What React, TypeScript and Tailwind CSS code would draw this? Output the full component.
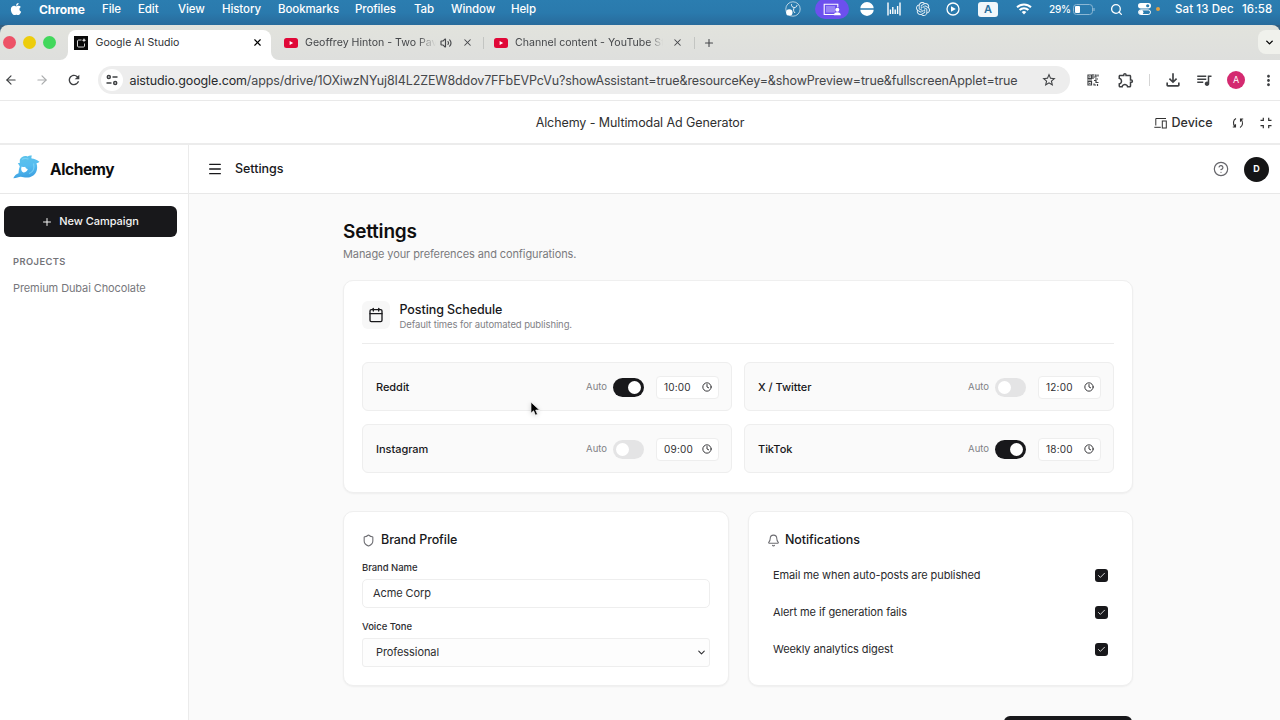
import React from 'react';
import { ArrowLeft, ArrowRight, Bell, Calendar, Check, ChevronDown, CircleHelp, Clock, Menu, Plus, Search, Shield, Volume2, X } from 'lucide-react';
import { FaApple } from 'react-icons/fa';
import { SiOpenai } from 'react-icons/si';
import { MdMoreVert, MdOutlineExtension, MdOutlineFileDownload, MdQueueMusic, MdRefresh, MdStarBorder } from 'react-icons/md';

const menuItems = [
  { label: 'File', className: 'w-[36px]' },
  { label: 'Edit', className: 'w-[40px]' },
  { label: 'View', className: 'w-[44px]' },
  { label: 'History', className: 'w-[56px]' },
  { label: 'Bookmarks', className: 'w-[77px]' },
  { label: 'Profiles', className: 'w-[59px]' },
  { label: 'Tab', className: 'w-[37px]' },
  { label: 'Window', className: 'w-[60px]' },
  { label: 'Help', className: 'w-[40px]' },
];

const schedules = [
  { name: 'Reddit', auto: true, time: '10:00' },
  { name: 'X / Twitter', auto: false, time: '12:00' },
  { name: 'Instagram', auto: false, time: '09:00' },
  { name: 'TikTok', auto: true, time: '18:00' },
];

const notifications = [
  'Email me when auto-posts are published',
  'Alert me if generation fails',
  'Weekly analytics digest',
];

const Cell = ({ className, children }: { className: string; children?: React.ReactNode }) => (
  <div className={`flex shrink-0 items-center justify-center ${className}`}>{children}</div>
);

const MenuBar = () => (
  <div className="flex h-[25px] shrink-0 items-center bg-linear-to-b from-[#2b7db0] via-[#2a7aad] to-[#286b9c] pb-[7px] text-[11.500px] font-medium tracking-[-0.100px] text-white">
    <Cell className="w-[31px]">
      <FaApple className="size-[14px]" />
    </Cell>
    <span className="ml-2 w-[63px] shrink-0 pt-[2px] text-[12px] font-bold">Chrome</span>
    {menuItems.map((item) => (
      <span key={item.label} className={`shrink-0 pt-[2px] ${item.className}`}>{item.label}</span>
    ))}
    <div className="grow" />
    <Cell className="w-[28px]">
      <svg viewBox="0 0 16 16" className="size-4" fill="none" stroke="white">
        <circle cx="8" cy="8" r="7.2" strokeWidth="0.8" opacity="0.8" />
        <circle cx="4.300" cy="11.400" r="3.200" fill="white" stroke="none" />
        <path d="M6.500 3.200c-.3 2 1 3.400 3 3.300 1.700-.1 2.500-1.200 2.500-2.600M9.500 6.500c-1.500 1.600-1.200 4 .6 5.500" strokeWidth="0.9" />
      </svg>
    </Cell>
    <Cell className="ml-[8px] h-[20px] w-[34px] rounded-full bg-[#6c50ee]">
      <svg viewBox="0 0 18 13" className="h-[13px] w-[18px]" fill="none" stroke="white" strokeWidth="1.100">
        <path d="M11 11.500H1.200V1.200h13.600v3" />
        <rect x="3" y="3" width="9" height="6.500" fill="#9885f5" stroke="none" />
        <circle cx="14.300" cy="6.800" r="2" fill="white" stroke="none" />
        <path d="M10.800 12.300c0-2 1.500-3 3.500-3s3.500 1 3.500 3z" fill="white" stroke="none" />
      </svg>
    </Cell>
    <Cell className="w-[35px]">
      <svg viewBox="0 0 14 14" className="size-[14px]" fill="white">
        <path d="M.3 6.300a6.700 6.200 0 0 1 13.400 0zM.3 7.700a6.700 6.200 0 0 0 13.400 0z" />
      </svg>
    </Cell>
    <Cell className="w-[20px]">
      <svg viewBox="0 0 14 14" className="size-[14px]" stroke="white" strokeWidth="1.400">
        <path d="M1 .5v13M3.400 7.500v4.500M5.800 5v7M8.200 7.500v4.500M10.600 4v8M13 .5v13" />
      </svg>
    </Cell>
    <Cell className="w-[38px]">
      <SiOpenai className="size-[14px] opacity-90" />
    </Cell>
    <Cell className="w-[22px]">
      <svg viewBox="0 0 14 14" className="size-[14px]" fill="none" stroke="white">
        <circle cx="7" cy="7" r="6" strokeWidth="1.300" />
        <path d="M5 4.200v5.600L9.800 7z" fill="white" stroke="none" />
      </svg>
    </Cell>
    <Cell className="ml-[14px] h-[15px] w-[20px] rounded-[3px] bg-[#f1f7fb] text-[11px] font-semibold text-[#2a709e]">A</Cell>
    <Cell className="w-[51px]">
      <svg viewBox="0 0 16 12" className="h-[12px] w-[16px]" fill="none" stroke="white" strokeWidth="2">
        <path d="M1 4.300a10 10 0 0 1 14 0M3.600 7a6.300 6.300 0 0 1 8.800 0" />
        <path d="M5.700 9a3.400 3.400 0 0 1 4.600 0L8 11.500z" fill="white" stroke="none" />
      </svg>
    </Cell>
    <span className="w-[24px] shrink-0 text-[10px] tracking-[-0.200px]">29%</span>
    <svg viewBox="0 0 22 11" className="h-[11px] w-[22px] shrink-0" fill="none">
      <rect x="0.500" y="0.500" width="19" height="10" rx="3" stroke="#8bb7d4" />
      <rect x="2" y="2" width="5" height="7" rx="1" fill="white" />
      <path d="M21 4v3" stroke="#8bb7d4" strokeWidth="1.200" />
    </svg>
    <Cell className="w-[43px]">
      <Search className="size-[13px]" strokeWidth={2.4} />
    </Cell>
    <svg viewBox="0 0 13 12" className="h-[12px] w-[13px] shrink-0">
      <rect width="13" height="5.500" rx="2.750" fill="white" />
      <circle cx="9.700" cy="2.750" r="1.600" fill="#2b7db0" />
      <rect x="0.500" y="6.900" width="12" height="4.600" rx="2.300" fill="#2b7db0" stroke="white" />
      <circle cx="3.200" cy="9.200" r="2.200" fill="white" />
    </svg>
    <div className="ml-[5px] size-1 shrink-0 rounded-full bg-[#dfa044]" />
    <span className="ml-[15px] w-[67px] shrink-0 pt-[2px] whitespace-nowrap text-[11.500px] tracking-[0.100px]">Sat 13 Dec</span>
    <span className="w-[38px] shrink-0 pt-[2px] text-[11.500px] tracking-[0.100px]">16:58</span>
  </div>
);

const YoutubeIcon = () => (
  <svg viewBox="0 0 14 10" className="h-[10px] w-[14px] shrink-0">
    <rect width="14" height="10" rx="2.500" fill="#e00837" />
    <path d="M5.600 2.900v4.200L9.200 5z" fill="white" />
  </svg>
);

const TabStrip = () => (
  <div className="shrink-0 bg-[#345f80]">
    <div className="flex h-[35px] items-end rounded-t-[8px] bg-linear-to-b from-[#e2e3dd] to-[#dedfdd] text-[10.600px] text-[#45474a]">
      <div className="flex h-[34px] w-[60px] shrink-0 items-center gap-[7px] pb-px pl-[2.500px]">
        <div className="size-[13px] rounded-full bg-[#ed5267]" />
        <div className="size-[13px] rounded-full bg-[#edcd0c]" />
        <div className="size-[13px] rounded-full bg-[#42d85c]" />
      </div>
      <svg viewBox="0 0 8 8" className="size-2 shrink-0" fill="white">
        <path d="M8 0v8H0a8 8 0 0 0 8-8z" />
      </svg>
      <div className="flex h-[30px] w-[203px] shrink-0 items-center rounded-t-[8px] bg-white pb-[5px] pl-[6px] text-[#303236]">
        <svg viewBox="0 0 14 14" className="size-[14px] shrink-0" fill="none">
          <rect width="14" height="14" fill="#0a0a0a" />
          <path d="M7.500 4H4.500C4 4 3.500 4.400 3.500 5v5c0 .6.400 1 1 1h5c.6 0 1-.4 1-1V7.500" stroke="#d5d5d5" />
          <path d="M10 2l.6 1.600 1.600.6-1.600.6L10 6.400l-.6-1.600-1.600-.6 1.600-.6z" fill="white" />
        </svg>
        <span className="ml-[7.500px] grow">Google AI Studio</span>
        <X className="mr-[8px] size-[11px] text-black" strokeWidth={2.500} />
      </div>
      <svg viewBox="0 0 8 8" className="size-2 shrink-0" fill="white">
        <path d="M0 0v8h8a8 8 0 0 1-8-8z" />
      </svg>
      <div className="flex h-[30px] shrink-0 items-center pb-[5px] pl-[5px]">
        <YoutubeIcon />
        <span className="ml-[7px] w-[131px] whitespace-nowrap [mask-image:linear-gradient(to_right,black_86%,transparent)]">Geoffrey Hinton - Two Pav</span>
        <Volume2 className="ml-[4px] size-[12px]" strokeWidth={2.300} />
        <X className="ml-[10px] size-[11px]" strokeWidth={2.300} />
        <div className="ml-[10px] h-3 w-px bg-[#c3c5c2]" />
        <div className="w-[10px]" />
        <YoutubeIcon />
        <span className="ml-[7px] w-[148px] whitespace-nowrap [mask-image:linear-gradient(to_right,black_90%,transparent)]">Channel content - YouTube St</span>
        <X className="ml-[9px] size-[11px]" strokeWidth={2.300} />
        <div className="ml-[11px] h-3 w-px bg-[#c3c5c2]" />
        <Plus className="ml-[8px] size-[12px]" strokeWidth={2.200} />
      </div>
      <div className="grow" />
      <Cell className="mb-[6px] h-[24px] w-[22px] rounded-l-[8px] bg-[#f0f1ec]">
        <ChevronDown className="size-[11px] text-black" strokeWidth={3} />
      </Cell>
    </div>
  </div>
);

const Toolbar = () => (
  <div className="flex h-[41px] shrink-0 items-center border-b border-[#e9e9e9] text-[#3e4043]">
    <Cell className="w-[22px]"><ArrowLeft className="size-[14px]" strokeWidth={2} /></Cell>
    <Cell className="w-[40px]"><ArrowRight className="size-[14px] text-[#aaacad]" strokeWidth={2} /></Cell>
    <Cell className="w-[24px]"><MdRefresh className="size-[16px]" /></Cell>
    <div className="ml-3 flex h-[28px] w-[972px] shrink-0 items-center rounded-full bg-[#ededed] pl-[3px]">
      <Cell className="size-[22px] rounded-full bg-white">
        <svg viewBox="0 0 12 12" className="size-3" fill="none" stroke="currentColor" strokeWidth="1.500">
          <circle cx="2.800" cy="3" r="1.500" />
          <path d="M6.500 3h5M.5 9h5" />
          <circle cx="9.200" cy="9" r="1.500" />
        </svg>
      </Cell>
      <span className="ml-[6.500px] grow pt-[2px] text-[12.500px] tracking-[-0.125px] whitespace-nowrap text-[#45474a]">
        <span className="text-[#27292c]">aistudio.google.com</span>/apps/drive/1OXiwzNYuj8I4L2ZEW8ddov7FFbEVPcVu?showAssistant=true&amp;resourceKey=&amp;showPreview=true&amp;fullscreenApplet=true
      </span>
      <MdStarBorder className="mr-[13px] size-[16px] shrink-0" />
    </div>
    <Cell className="w-[46px]">
      <svg viewBox="0 0 12 12" className="size-3" fill="none" stroke="currentColor" strokeWidth="1.200">
        <path d="M1 1h3.500v3.500H1zM7.500 1H9v2H7M11 .5v2M8 5h3M1 7.500h3.500V11H1zM6 0v5M0 6h5M7 6.500h2v2h2.500M7 9.500V11h2M10.500 10v2" />
        <path d="M2.200 2.200h1.200v1.200H2.200zM2.200 8.700h1.200v1.200H2.200z" fill="currentColor" stroke="none" />
      </svg>
    </Cell>
    <Cell className="w-[20px]"><MdOutlineExtension className="size-[18px]" /></Cell>
    <Cell className="w-[26px]"><div className="h-3 w-px bg-[#d5d5d5]" /></Cell>
    <Cell className="w-[22px]"><MdOutlineFileDownload className="size-[20px]" /></Cell>
    <Cell className="w-[40px]"><MdQueueMusic className="size-[18px]" /></Cell>
    <Cell className="w-[24px]">
      <div className="flex size-[18px] items-center justify-center rounded-full bg-[#d42a70] text-[9px] text-white">A</div>
    </Cell>
    <Cell className="w-[40px]"><MdMoreVert className="size-[17px]" /></Cell>
  </div>
);

const AppletBar = () => (
  <div className="flex h-[44px] shrink-0 items-center border-b-2 border-[#ececec] pt-[2px] text-[#303030]">
    <div className="w-[126px]" />
    <div className="grow text-center text-[12.500px] tracking-[-0.090px]">Alchemy - Multimodal Ad Generator</div>
    <div className="flex w-[126px] shrink-0 items-center">
      <svg viewBox="0 0 13 12" className="h-3 w-[13px]" fill="none" stroke="currentColor">
        <path d="M1.800 8.500V1.500H12M.3 10.300h6.500" />
        <rect x="8.300" y="4" width="4" height="7" />
      </svg>
      <span className="ml-[4.500px] w-[60px] text-[12.500px] font-medium">Device</span>
      <svg viewBox="0 0 12 12" className="size-3" fill="none" stroke="currentColor" strokeWidth="1.100">
        <path d="M4 1.500C1.200 3 .5 6.500 3 9.800M.8 10H3.500V7.300M8 10.500c2.800-1.500 3.500-5 1-8.300M11.200 2H8.500v2.700" />
      </svg>
      <svg viewBox="0 0 12 12" className="ml-[16px] size-3 shrink-0" fill="none" stroke="currentColor" strokeWidth="1.200">
        <path d="M3.300 .8v2.500H.5M8.700 .8v2.500h2.800M3.300 11.200V8.700H.5M8.700 11.200V8.700h2.800" />
      </svg>
    </div>
  </div>
);

const DolphinLogo = () => (
  <svg viewBox="0 0 27 24" className="h-6 w-[27px] shrink-0">
    <defs>
      <linearGradient id="dolphin" x1="0.300" y1="0" x2="0.500" y2="1">
        <stop offset="0" stopColor="#5dc3ea" />
        <stop offset="0.500" stopColor="#55bcf0" />
        <stop offset="1" stopColor="#3c9fe0" />
      </linearGradient>
    </defs>
    <path d="M6.800 4.800C8.500 1.500 11.500.4 14.500 1.500c1.500-1.100 3.200-1.300 4.500-.8-.7.9-.8 1.800-.4 2.700 2.600 0 5.500 1.300 7.900 3.300-.8.900-1.900 1.400-3 1.600 2 6.200-.6 12.200-6.700 13.900-3.400.9-6.500 0-9-.4-2.200.3-4.200 1.200-7.500 1.400 1.200-2.300 2.900-4.400 5.200-5 .2-2.600.5-4.700 1.300-6.600-.5-1.200-.8-2-2-3 .7-.4 1.300-.5 2-.5zM8.700 11.500c-1.100 2.500-.5 4.800 1.600 6 2.300-.3 3.900-1.400 4.500-3.600-1.500-.1-2.300-.8-2.700-2.100-1.100.4-2.300.3-3.400-.3z" fill="url(#dolphin)" fillRule="evenodd" />
    <path d="M20.500 8.500c1.200 4.500-.5 8.500-4.500 10.200M9 4.500c2-1.500 4.500-1.300 6.500-.3" fill="none" stroke="#8bdcfa" strokeWidth="1.300" opacity="0.600" />
  </svg>
);

const Sidebar = () => (
  <aside className="flex w-[189px] shrink-0 flex-col border-r border-[#ebebeb] bg-white">
    <div className="flex h-[49px] shrink-0 items-center border-b border-[#e8e8e8] pl-[12.500px]">
      <div className="pb-1"><DolphinLogo /></div>
      <span className="ml-[10.500px] pt-px text-[15.500px] font-bold tracking-[-0.400px] text-[#0c0c0d]">Alchemy</span>
    </div>
    <button className="mt-3 ml-[3.500px] flex h-[31px] w-[173px] items-center justify-center gap-[6px] rounded-[6px] bg-[#18181b] text-[11px] font-medium tracking-[-0.050px] text-[#f4f4f4]">
      <Plus className="size-[12px]" strokeWidth={2} />
      New Campaign
    </button>
    <h3 className="mt-[17px] ml-[13px] text-[9.300px] leading-[15px] font-semibold tracking-[0.450px] text-[#747479]">PROJECTS</h3>
    <p className="mt-[11px] ml-[13px] text-[11px] leading-[16px] tracking-[-0.100px] text-[#77777c]">Premium Dubai Chocolate</p>
  </aside>
);

const Toggle = ({ on }: { on: boolean }) => (
  <div className={`flex h-[19px] w-[31px] items-center rounded-full px-[3px] ${on ? 'justify-end bg-[#18181b]' : 'bg-[#e4e4e5]'}`}>
    <div className="size-[13px] rounded-full bg-white" />
  </div>
);

const Settings = () => (
  <main className="flex grow flex-col bg-[#fafafa] pt-[27px] pl-[154px]">
    <h1 className="text-[19px] leading-[22px] font-semibold tracking-[-0.200px] text-[#0f0f10]">Settings</h1>
    <p className="mt-[3px] text-[11px] leading-[16px] tracking-[-0.100px] text-[#7a7a7e]">Manage your preferences and configurations.</p>

    <section className="mt-[18px] h-[213px] w-[790px] shrink-0 rounded-[10px] border border-[#efefef] bg-white px-[18px] pt-[18px] shadow-xs">
      <div className="flex h-[45px] border-b border-[#ececec]">
        <Cell className="mt-[2px] size-[28px] rounded-[6px] bg-[#f7f7f7]">
          <Calendar className="size-[16px] text-[#18181b]" strokeWidth={2} />
        </Cell>
        <div className="ml-[9.500px]">
          <h2 className="pt-px text-[12.500px] leading-[19px] font-medium tracking-[-0.080px] text-[#18181b]">Posting Schedule</h2>
          <p className="text-[9.500px] leading-[12px] tracking-[-0.100px] text-[#818186]">Default times for automated publishing.</p>
        </div>
      </div>
      <div className="mt-[18px] grid grid-cols-2 gap-x-3 gap-y-[13px]">
        {schedules.map((item) => (
          <div key={item.name} className="flex h-[49px] items-center rounded-[6px] border border-[#eeeeee] bg-[#fafafa] pt-px pr-[12px] pl-[13px]">
            <span className="grow text-[11px] font-medium tracking-[-0.040px] text-[#18181b]">{item.name}</span>
            <span className="mr-[6px] text-[9.500px] text-[#818186]">Auto</span>
            <Toggle on={item.auto} />
            <div className="ml-[12px] flex h-[23px] w-[63px] items-center justify-between rounded-[4px] border border-[#eeeeee] bg-white pr-[6px] pl-[7px] text-[10px] text-[#303033]">
              <span className="tracking-[0.200px]">{item.time}</span>
              <Clock className="size-[10px]" strokeWidth={2.300} />
            </div>
          </div>
        ))}
      </div>
    </section>

    <div className="mt-[18px] flex w-[790px] shrink-0 gap-[19px]">
      <section className="h-[175px] w-[386px] shrink-0 rounded-[10px] border border-[#efefef] bg-white px-[18px] pt-[18px] shadow-xs">
        <h2 className="flex items-center text-[12.500px] leading-[20px] font-medium tracking-[-0.080px] text-[#18181b]">
          <Shield className="mr-[6px] size-[13px] text-[#6d6d72]" strokeWidth={2} />
          Brand Profile
        </h2>
        <label className="mt-[11px] block text-[9.500px] leading-[14px] font-medium tracking-[-0.050px] text-[#2d2d30]">Brand Name</label>
        <div className="mt-[4px] flex h-[29px] items-center rounded-[5px] border border-[#eeeeee] px-[10px] text-[11px] tracking-[-0.080px] text-[#2d2d30]">Acme Corp</div>
        <label className="mt-[12px] block text-[9.500px] leading-[14px] font-medium tracking-[-0.050px] text-[#2d2d30]">Voice Tone</label>
        <div className="mt-[4px] flex h-[29px] items-center justify-between rounded-[3px] border border-[#eeeeee] bg-[#fdfdfd] pr-[2px] pl-[13px] text-[11px] tracking-[-0.080px] text-[#2d2d30]">
          Professional
          <ChevronDown className="size-[11px]" strokeWidth={2.300} />
        </div>
      </section>
      <section className="h-[175px] w-[385px] shrink-0 rounded-[10px] border border-[#efefef] bg-white px-[18px] pt-[18px] shadow-xs">
        <h2 className="flex items-center text-[12.500px] leading-[20px] font-medium tracking-[-0.080px] text-[#18181b]">
          <Bell className="mr-[5px] size-[13px] text-[#6d6d72]" strokeWidth={2} />
          Notifications
        </h2>
        <div className="mt-[7px]">
          {notifications.map((text) => (
            <div key={text} className="flex h-[37px] items-center justify-between pr-[6px] pl-[6px] text-[11px] tracking-[-0.100px] text-[#29292c]">
              {text}
              <div className="flex size-[13px] items-center justify-center rounded-[3px] bg-[#18181b]">
                <Check className="size-[9px] text-[#dddddd]" strokeWidth={2.500} />
              </div>
            </div>
          ))}
        </div>
      </section>
    </div>
    <button className="mt-[30px] ml-[661px] h-[32px] w-[128px] shrink-0 rounded-[6px] bg-[#18181b]" />
  </main>
);

const App = () => (
  <div className="relative flex h-[720px] w-[1280px] flex-col overflow-hidden bg-white font-[Inter,sans-serif]">
    <MenuBar />
    <TabStrip />
    <Toolbar />
    <AppletBar />
    <div className="flex h-[575px] shrink-0 overflow-hidden">
      <Sidebar />
      <div className="flex grow flex-col">
        <header className="flex h-[49px] shrink-0 items-center border-b border-[#e8e8e8] pr-[11px] pl-[18px]">
          <Menu className="size-[16px] text-[#18181b]" strokeWidth={2} />
          <span className="ml-[12px] grow pt-px text-[12.500px] font-medium tracking-[-0.050px] text-[#18181b]">Settings</span>
          <CircleHelp className="mr-[15px] size-[16px] text-[#66666b]" strokeWidth={1.800} />
          <div className="flex size-[25px] items-center justify-center rounded-full bg-[#151516] text-[9px] font-bold text-white">D</div>
        </header>
        <Settings />
      </div>
    </div>
    {/* mouse pointer */}
    <svg viewBox="0 0 12 17" className="absolute top-[401px] left-[530px] h-[16px] w-[11px] drop-shadow-sm">
      <path d="M1 1v12.200l2.900-2.700 2 4.800 2.300-1-2-4.600h4.200z" fill="black" stroke="white" strokeWidth="0.800" />
    </svg>
  </div>
);

export default App;
